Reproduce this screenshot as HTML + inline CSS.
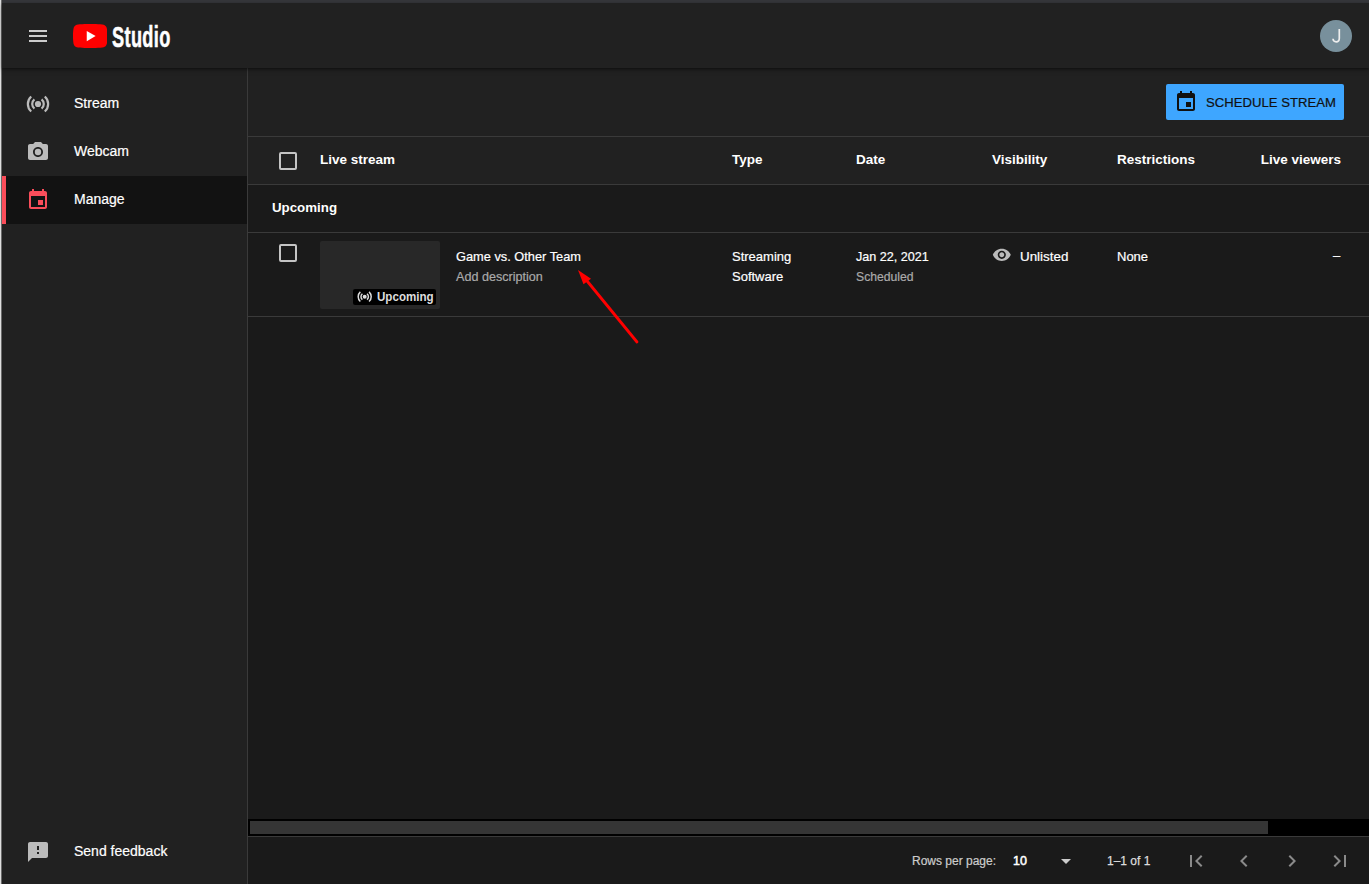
<!DOCTYPE html>
<html><head><meta charset="utf-8">
<style>
*{box-sizing:border-box;margin:0;padding:0}
html,body{width:1369px;height:884px;overflow:hidden;background:#1a1a1a;font-family:"Liberation Sans",sans-serif;color:#fff}
.abs{position:absolute}
#frame{left:0;top:0;width:1369px;height:3px;background:#35363a}
#lborder{left:0;top:0;width:2px;height:884px;background:linear-gradient(to right,#dedede 0,#dedede 1px,#6a6a6a 1px,#6a6a6a 2px)}
#header{left:2px;top:3px;width:1367px;height:65px;background:#212121;box-shadow:0 1px 2px rgba(0,0,0,.35),0 2px 5px rgba(0,0,0,.3);z-index:5}
#sidebar{left:2px;top:68px;width:245px;height:816px;background:#212121}
#sbborder{left:247px;top:68px;width:1px;height:816px;background:#3a3a3a}
#toolbar{left:248px;top:68px;width:1121px;height:68px;background:#212121}
#thead{left:248px;top:136px;width:1121px;height:48px;background:#212121;border-top:1px solid #3a3a3a}
.hline{height:1px;background:#3a3a3a}
.txt{position:absolute;white-space:nowrap;line-height:1}
.nav{font-size:14px;color:#fff;-webkit-text-stroke:0.2px #fff}
.th{font-size:13.5px;font-weight:bold;color:#fff}
.td{font-size:13px;color:#fff;-webkit-text-stroke:0.2px #fff}
.sub{font-size:12.6px;color:#aaa;-webkit-text-stroke:0.2px #aaa}
.cb{position:absolute;width:18px;height:18px;border:2px solid #c4c4c4;border-radius:2px}
svg{position:absolute;display:block}
</style></head><body>
<div class="abs" id="frame"></div>
<div class="abs" id="lborder"></div>
<div class="abs" id="header">
  <!-- hamburger -->
  <div class="abs" style="left:27px;top:27px;width:18px;height:2px;background:#ccc"></div>
  <div class="abs" style="left:27px;top:32px;width:18px;height:2px;background:#ccc"></div>
  <div class="abs" style="left:27px;top:37px;width:18px;height:2px;background:#ccc"></div>
  <!-- logo -->
  <svg style="left:71.1px;top:20.8px" width="34.4" height="24.1" viewBox="0 3.6 24 16.8"><path fill="#f00" d="M23.5 6.2c-.3-1-1.1-1.8-2.1-2.1C19.5 3.6 12 3.6 12 3.6s-7.5 0-9.4.5c-1 .3-1.8 1.1-2.1 2.1C0 8.1 0 12 0 12s0 3.9.5 5.8c.3 1 1.1 1.8 2.1 2.1 1.9.5 9.4.5 9.4.5s7.5 0 9.4-.5c1-.3 1.8-1.1 2.1-2.1.5-1.9.5-5.8.5-5.8s0-3.9-.5-5.8z"/><path fill="#fff" d="M9.6 15.6l6.2-3.6-6.2-3.6z"/></svg>
  
  <div class="txt" id="studio" style="left:110px;top:19px;font-size:30px;font-weight:bold;color:#fff;transform:scaleX(0.605);transform-origin:0 0;letter-spacing:0.6px;-webkit-text-stroke:0.6px #fff">Studio</div>
  <!-- avatar -->
  <div class="abs" style="left:1318px;top:17px;width:32px;height:32px;border-radius:50%;background:#78909c"></div>
  <svg style="left:1318px;top:17px" width="32" height="32" viewBox="1320 20 32 32"><path d="M1339.3 29 V38.2 Q1339.3 41.8 1336.2 41.8 Q1333.2 41.8 1333 38.8" fill="none" stroke="#eee" stroke-width="1.7"/></svg>
</div>
<div class="abs" id="sidebar"></div>
<div class="abs" id="sbborder"></div>
<!-- sidebar items -->
<svg style="left:26px;top:92px" width="24" height="24" viewBox="-12 -12 24 24"><circle r="3.1" fill="#bbb"/><path d="M-6.79 -7.54A10.15 10.15 0 0 0 -6.79 7.54M6.79 -7.54A10.15 10.15 0 0 1 6.79 7.54M-3.57 -4.57A5.8 5.8 0 0 0 -3.57 4.57M3.57 -4.57A5.8 5.8 0 0 1 3.57 4.57" fill="none" stroke="#bbb" stroke-width="2.2"/></svg>
<div class="txt nav" style="left:74px;top:96px">Stream</div>
<svg style="left:26px;top:140px" width="24" height="24" viewBox="0 0 24 24"><circle cx="12" cy="12" r="3.2" fill="#bbb"/><path fill="#bbb" d="M9 2L7.17 4H4c-1.1 0-2 .9-2 2v12c0 1.1.9 2 2 2h16c1.1 0 2-.9 2-2V6c0-1.1-.9-2-2-2h-3.17L15 2H9zm3 15c-2.76 0-5-2.24-5-5s2.240-5 5-5 5 2.24 5 5-2.24 5-5 5z"/></svg>
<div class="txt nav" style="left:74px;top:144px">Webcam</div>
<div class="abs" style="left:2px;top:176px;width:245px;height:48px;background:#121212"></div>
<div class="abs" style="left:2px;top:176px;width:4px;height:48px;background:#fa4d5a"></div>
<svg style="left:26px;top:188px" width="24" height="24" viewBox="0 0 24 24"><path fill="#fa4d5a" d="M17 12h-5v5h5v-5zM16 1v2H8V1H6v2H5c-1.11 0-1.99.9-1.99 2L3 19c0 1.1.89 2 2 2h14c1.1 0 2-.9 2-2V5c0-1.1-.9-2-2-2h-1V1h-2zm3 18H5V8h14v11z"/></svg>
<div class="txt nav" style="left:74px;top:192px">Manage</div>
<svg style="left:26px;top:840px" width="24" height="24" viewBox="0 0 24 24"><path fill="#bbb" d="M20 2H4c-1.1 0-1.99.9-1.990 2L2 22l4-4h14c1.1 0 2-.9 2-2V4c0-1.1-.9-2-2-2zm-7 12h-2v-2h2v2zm0-4h-2V6h2v4z"/></svg>
<div class="txt nav" style="left:74px;top:844px">Send feedback</div>

<div class="abs" id="toolbar"></div>
<!-- schedule button -->
<div class="abs" style="left:1166px;top:84px;width:178px;height:36px;background:#3ea6ff;border-radius:2px"></div>
<svg style="left:1174px;top:90px" width="24" height="24" viewBox="0 0 24 24"><path fill="#111" d="M17 12h-5v5h5v-5zM16 1v2H8V1H6v2H5c-1.11 0-1.99.9-1.99 2L3 19c0 1.1.89 2 2 2h14c1.1 0 2-.9 2-2V5c0-1.1-.9-2-2-2h-1V1h-2zm3 18H5V8h14v11z"/></svg>
<div class="txt" id="btntxt" style="left:1206px;top:96px;font-size:13px;color:#111;-webkit-text-stroke:0.2px #111;transform:scaleX(1.01);transform-origin:0 0">SCHEDULE STREAM</div>

<div class="abs" id="thead"></div>
<div class="cb" style="left:279px;top:152px"></div>
<div class="txt th" style="left:320px;top:153px">Live stream</div>
<div class="txt th" style="left:732px;top:153px">Type</div>
<div class="txt th" style="left:856px;top:153px">Date</div>
<div class="txt th" style="left:992px;top:153px">Visibility</div>
<div class="txt th" style="left:1117px;top:153px">Restrictions</div>
<div class="txt th" style="right:28px;top:153px">Live viewers</div>
<div class="abs hline" style="left:248px;top:184px;width:1121px"></div>
<div class="txt th" style="left:272px;top:201px;font-size:13.3px">Upcoming</div>
<div class="abs hline" style="left:248px;top:232px;width:1121px"></div>

<!-- row -->
<div class="cb" style="left:279px;top:244px"></div>
<div class="abs" style="left:320px;top:241px;width:120px;height:68px;background:#282828;border-radius:2px"></div>
<div class="abs" style="left:353px;top:289px;width:83px;height:16px;background:#000;border-radius:2px"></div>
<svg style="left:357.1px;top:289.2px" width="15.4" height="15.4" viewBox="-12 -12 24 24"><circle r="3.1" fill="#ddd"/><path d="M-6.79 -7.54A10.15 10.15 0 0 0 -6.79 7.54M6.79 -7.54A10.15 10.15 0 0 1 6.79 7.54M-3.57 -4.57A5.8 5.8 0 0 0 -3.57 4.57M3.57 -4.57A5.8 5.8 0 0 1 3.57 4.57" fill="none" stroke="#ddd" stroke-width="2.3"/></svg>
<div class="txt" style="left:377px;top:291px;font-size:12px;font-weight:bold;color:#ddd;transform:scaleX(0.965);transform-origin:0 0">Upcoming</div>
<div class="txt td" style="left:456px;top:251px;font-size:12.8px">Game vs. Other Team</div>
<div class="txt sub" style="left:456px;top:271px">Add description</div>
<div class="txt td" style="left:732px;top:250px">Streaming</div>
<div class="txt td" style="left:732px;top:270px">Software</div>
<div class="txt td" style="left:856px;top:251px;font-size:12.6px">Jan 22, 2021</div>
<div class="txt sub" style="left:856px;top:271px;font-size:12.2px">Scheduled</div>
<svg style="left:992px;top:245px" width="19.6" height="19.6" viewBox="0 0 24 24"><path fill="#bbb" d="M12 4.5C7 4.5 2.73 7.61 1 12c1.73 4.39 6 7.5 11 7.5s9.27-3.11 11-7.5c-1.73-4.39-6-7.5-11-7.5zM12 17c-2.76 0-5-2.24-5-5s2.24-5 5-5 5 2.24 5 5-2.24 5-5 5zm0-8c-1.66 0-3 1.34-3 3s1.34 3 3 3 3-1.34 3-3-1.34-3-3-3z"/></svg>
<div class="txt td" style="left:1020px;top:250px;font-size:13.4px">Unlisted</div>
<div class="txt td" style="left:1117px;top:250px">None</div>
<div class="txt td" style="left:1333px;top:249px">–</div>
<div class="abs hline" style="left:248px;top:316px;width:1121px"></div>

<!-- arrow -->
<svg style="left:560px;top:260px" width="90" height="90" viewBox="560 260 90 90"><line x1="583" y1="276" x2="637" y2="342" stroke="#f00" stroke-width="2.8" stroke-linecap="round"/><path d="M578 270 L591 278.8 L583.5 284.2 Z" fill="#f00"/></svg>

<!-- scrollbar -->
<div class="abs" style="left:248px;top:819px;width:1121px;height:17px;background:#000"></div>
<div class="abs" style="left:250px;top:821px;width:1018px;height:13px;background:#353535"></div>
<div class="abs hline" style="left:248px;top:836px;width:1121px"></div>

<!-- footer -->
<div class="txt" style="left:912px;top:855px;font-size:12px;color:#ccc;-webkit-text-stroke:0.2px #ccc">Rows per page:</div>
<div class="txt" style="left:1013px;top:855px;font-size:12.5px;color:#fff;-webkit-text-stroke:0.5px #fff">10</div>
<svg style="left:1061px;top:859px" width="10" height="5" viewBox="0 0 10 5"><path d="M0 0h10L5 5z" fill="#ccc"/></svg>
<div class="txt" style="left:1107px;top:855px;font-size:12px;color:#ddd;-webkit-text-stroke:0.25px #ddd">1–1 of 1</div>
<svg style="left:1184px;top:849px" width="24" height="24" viewBox="0 0 24 24"><path fill="#8a8a8a" d="M18.41 16.59L13.82 12l4.59-4.59L17 6l-6 6 6 6zM6 6h2v12H6z"/></svg>
<svg style="left:1232px;top:849px" width="24" height="24" viewBox="0 0 24 24"><path fill="#8a8a8a" d="M15.41 7.41L14 6l-6 6 6 6 1.41-1.41L10.83 12z"/></svg>
<svg style="left:1280px;top:849px" width="24" height="24" viewBox="0 0 24 24"><path fill="#8a8a8a" d="M10 6L8.59 7.41 13.17 12l-4.58 4.59L10 18l6-6z"/></svg>
<svg style="left:1328px;top:849px" width="24" height="24" viewBox="0 0 24 24"><path fill="#8a8a8a" d="M5.59 7.41L10.18 12l-4.59 4.59L7 18l6-6-6-6zM16 6h2v12h-2z"/></svg>
</body></html>
